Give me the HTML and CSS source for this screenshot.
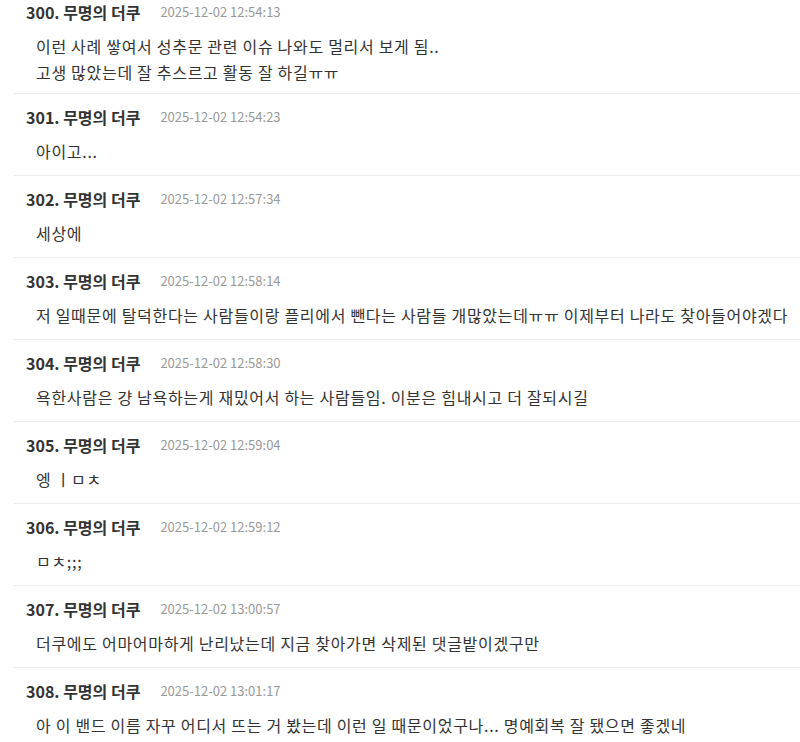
FILE: index.html
```html
<!DOCTYPE html>
<html>
    <head>
        <title>댓글</title>
        <link rel="stylesheet" href="styles.css">
    </head>
    <body>
        <ul class="comments">
            <li class="comment">
                <div class="meta"><span class="nick">300. 무명의 더쿠</span><span class="date">2025-12-02 12:54:13</span></div>
                <div class="text">이런 사례 쌓여서 성추문 관련 이슈 나와도 멀리서 보게 됨..<br>고생 많았는데 잘 추스르고 활동 잘 하길ㅠㅠ</div>
            </li>
            <li class="comment">
                <div class="meta"><span class="nick">301. 무명의 더쿠</span><span class="date">2025-12-02 12:54:23</span></div>
                <div class="text">아이고...</div>
            </li>
            <li class="comment">
                <div class="meta"><span class="nick">302. 무명의 더쿠</span><span class="date">2025-12-02 12:57:34</span></div>
                <div class="text">세상에</div>
            </li>
            <li class="comment">
                <div class="meta"><span class="nick">303. 무명의 더쿠</span><span class="date">2025-12-02 12:58:14</span></div>
                <div class="text">저 일때문에 탈덕한다는 사람들이랑 플리에서 뺀다는 사람들 개많았는데ㅠㅠ 이제부터 나라도 찾아들어야겠다</div>
            </li>
            <li class="comment">
                <div class="meta"><span class="nick">304. 무명의 더쿠</span><span class="date">2025-12-02 12:58:30</span></div>
                <div class="text">욕한사람은 걍 남욕하는게 재밌어서 하는 사람들임. 이분은 힘내시고 더 잘되시길</div>
            </li>
            <li class="comment">
                <div class="meta"><span class="nick">305. 무명의 더쿠</span><span class="date">2025-12-02 12:59:04</span></div>
                <div class="text">엥 ㅣㅁㅊ</div>
            </li>
            <li class="comment">
                <div class="meta"><span class="nick">306. 무명의 더쿠</span><span class="date">2025-12-02 12:59:12</span></div>
                <div class="text">ㅁㅊ;;;</div>
            </li>
            <li class="comment">
                <div class="meta"><span class="nick">307. 무명의 더쿠</span><span class="date">2025-12-02 13:00:57</span></div>
                <div class="text">더쿠에도 어마어마하게 난리났는데 지금 찾아가면 삭제된 댓글밭이겠구만</div>
            </li>
            <li class="comment">
                <div class="meta"><span class="nick">308. 무명의 더쿠</span><span class="date">2025-12-02 13:01:17</span></div>
                <div class="text">아 이 밴드 이름 자꾸 어디서 뜨는 거 봤는데 이런 일 때문이었구나... 명예회복 잘 됐으면 좋겠네</div>
            </li>
        </ul>
    </body>
</html>
```

FILE: styles.css
```css
body {
    margin: 0;
    background: #fff;
    font-family: "Noto Sans CJK KR", "Noto Sans", sans-serif;
    color: #333;
}
.comments {
    list-style: none;
    margin: 0;
    padding: 0 0 0 14px;
}
.comment {
    padding: 13px 0 11px 12px;
    border-bottom: 1px solid #ececec;
}
.comment:first-child {
    padding-top: 2px;
    padding-bottom: 8px;
}
.meta {
    display: flex;
    align-items: center;
    gap: 20px;
    height: 20px;
    line-height: 20px;
}
.nick {
    font-size: 16px;
    font-weight: bold;
    color: #333;
}
.date {
    font-size: 13px;
    color: #999;
}
.text {
    margin-top: 11px;
    padding-left: 10px;
    font-size: 16px;
    letter-spacing: 0.7px;
    line-height: 26px;
    color: #333;
}
```
